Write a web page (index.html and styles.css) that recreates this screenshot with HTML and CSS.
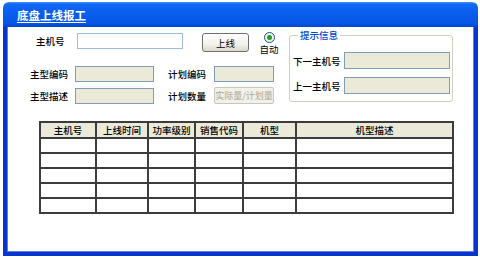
FILE: index.html
```html
<!DOCTYPE html>
<html>
<head>
<meta charset="utf-8">
<link rel="stylesheet" href="styles.css">
</head>
<body>
<div class="window">
  <div class="titlebar"><span class="title">底盘上线报工</span></div>
  <div class="content">
    <div class="top">
      <div class="left">
        <div class="row row1">
          <span class="lbl lbl-main">主机号</span>
          <span class="input input-white w-main"></span>
          <span class="btn">上线</span>
          <span class="auto">
            <span class="radio"><span class="dot"></span></span>
            <span class="auto-text">自动</span>
          </span>
        </div>
        <div class="row row2">
          <span class="lbl lbl-a">主型编码</span>
          <span class="input input-ro w-a"></span>
          <span class="lbl lbl-b">计划编码</span>
          <span class="input input-ro w-b"></span>
        </div>
        <div class="row row3">
          <span class="lbl lbl-a">主型描述</span>
          <span class="input input-ro w-a"></span>
          <span class="lbl lbl-b">计划数量</span>
          <span class="btn-dis">实际量/计划量</span>
        </div>
      </div>
      <fieldset class="group">
        <legend class="legend">提示信息</legend>
        <div class="grow grow1">
          <span class="lbl glbl">下一主机号</span>
          <span class="input input-ro w-g"></span>
        </div>
        <div class="grow grow2">
          <span class="lbl glbl">上一主机号</span>
          <span class="input input-ro w-g"></span>
        </div>
      </fieldset>
    </div>
    <table class="grid">
      <colgroup>
        <col class="c1"><col class="c2"><col class="c3"><col class="c4"><col class="c5"><col class="c6">
      </colgroup>
      <thead>
        <tr class="hrow"><th>主机号</th><th>上线时间</th><th>功率级别</th><th>销售代码</th><th>机型</th><th>机型描述</th></tr>
      </thead>
      <tbody>
        <tr class="drow"><td></td><td></td><td></td><td></td><td></td><td></td></tr>
        <tr class="drow"><td></td><td></td><td></td><td></td><td></td><td></td></tr>
        <tr class="drow"><td></td><td></td><td></td><td></td><td></td><td></td></tr>
        <tr class="drow"><td></td><td></td><td></td><td></td><td></td><td></td></tr>
        <tr class="drow"><td></td><td></td><td></td><td></td><td></td><td></td></tr>
      </tbody>
    </table>
  </div>
</div>
</body>
</html>
```
FILE: styles.css
```css
html, body {
  margin: 0;
  padding: 0;
  background: #ffffff;
}
body {
  font-family: "Noto Sans CJK SC", "Noto Sans", sans-serif;
  font-size: 9.5px;
  color: #000;
}
.window {
  margin: 2px 0 0 3px;
  width: 475px;
  height: 254px;
  display: flex;
  flex-direction: column;
  box-sizing: border-box;
}
.titlebar {
  height: 25px;
  flex: none;
  border-radius: 6px 6px 0 0;
  background: linear-gradient(#4d95ff 0, #1168f5 2px, #0a5fee 40%, #0756e6 85%, #0447c8 100%);
  display: flex;
  align-items: center;
  padding-left: 14px;
  box-sizing: border-box;
}
.title {
  color: #fff;
  font-size: 11.5px;
  font-weight: bold;
  text-decoration: underline;
  text-underline-offset: 2px;
  line-height: 14px;
  margin-top: 1px;
}
.content {
  flex: 1;
  background: #fff;
  border: 4px solid #0635d0;
  border-top: none;
  box-shadow: inset 1px 0 0 #5a7fe6, inset -1px 0 0 #5a7fe6, inset 0 -1px 0 #5a7fe6;
  display: flex;
  flex-direction: column;
}
.top {
  display: flex;
  align-items: flex-start;
  height: 75px;
}
.left {
  width: 282px;
  padding-top: 6px;
}
.row {
  display: flex;
  align-items: center;
}
.row2 { margin-top: 11px; }
.row3 { margin-top: 5px; }
.lbl {
  line-height: 12px;
  white-space: nowrap;
  font-weight: 500;
}
.lbl-main { margin-left: 29px; width: 41px; }
.lbl-a { margin-left: 23px; width: 45px; }
.lbl-b { margin-left: 14px; width: 46px; }
.input {
  display: block;
  height: 16px;
  box-sizing: border-box;
  border: 1px solid #7f9db9;
}
.input-white {
  background: #fff;
  border-color: #9cbce0;
}
.input-ro {
  background: #ebe9d8;
}
.w-main { width: 106px; }
.w-a { width: 79px; }
.w-b { width: 60px; }
.row1 { align-items: flex-start; }
.row1 .lbl { margin-top: 2px; }
.btn {
  margin-left: 19px;
  width: 47px;
  height: 19px;
  box-sizing: border-box;
  border: 1px solid #6f6f6f;
  border-radius: 3px;
  background: linear-gradient(#ffffff, #f2f1ea 60%, #dcd9cc);
  display: flex;
  align-items: center;
  justify-content: center;
  line-height: 12px;
}
.auto {
  margin-left: 9px;
  margin-top: -1px;
  width: 22px;
  display: flex;
  flex-direction: column;
  align-items: center;
}
.radio {
  width: 11px;
  height: 11px;
  box-sizing: border-box;
  border: 1px solid #1c5180;
  border-radius: 50%;
  background: #f4f4ef;
  display: flex;
  align-items: center;
  justify-content: center;
}
.dot {
  width: 5px;
  height: 5px;
  border-radius: 50%;
  background: #21a121;
}
.auto-text {
  line-height: 12px;
  margin-top: 0px;
}
.btn-dis {
  width: 60px;
  height: 17px;
  box-sizing: border-box;
  border: 1px solid #c9c7ba;
  border-radius: 2px;
  background: #f1f0e9;
  color: #aca899;
  display: flex;
  align-items: center;
  justify-content: center;
  white-space: nowrap;
  font-size: 9px;
  overflow: hidden;
}
.group {
  margin: 2px 0 0 0;
  padding: 0 2px 7px 3px;
  width: 164px;
  box-sizing: border-box;
  border: 1px solid #d0d0bf;
  border-radius: 3px;
  min-width: 0;
}
.legend {
  color: #0046d5;
  padding: 0 2px;
  margin-left: 5px;
  line-height: 12px;
  font-weight: 500;
}
.grow {
  display: flex;
  align-items: center;
}
.grow1 { margin-top: 11px; }
.grow2 { margin-top: 8px; }
.glbl { width: 51px; }
.w-g { width: 106px; height: 17px; }
.grid {
  margin: 19px 0 0 32px;
  border-collapse: collapse;
  width: 413px;
  table-layout: fixed;
}
.c1 { width: 56px; }
.c2 { width: 52px; }
.c3 { width: 47px; }
.c4 { width: 48px; }
.c5 { width: 53px; }
.c6 { width: 157px; }
.grid th, .grid td {
  border: 2px solid #3c3c3c;
  padding: 0;
}
.hrow { height: 15.5px; }
.drow { height: 15.2px; }
.grid th {
  background: #ebe9d8;
  font-weight: 500;
  line-height: 12px;
  text-align: center;
}
```
